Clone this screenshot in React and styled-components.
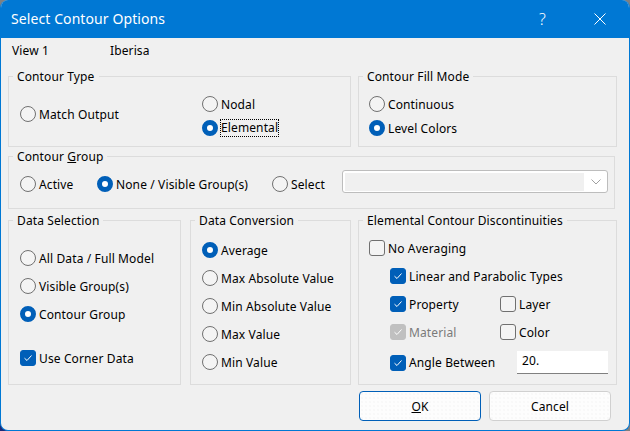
import styled, { createGlobalStyle } from 'styled-components'

const GlobalStyle = createGlobalStyle`
	html, body {
		margin: 0;
		padding: 0;
		height: 100%;
		background: linear-gradient(45deg, #1c2a78 12px, #808080 12px);
	}
	body {
		font-family: 'Noto Sans', 'Open Sans', sans-serif;
		font-size: 12px;
		letter-spacing: 0.12px;
		color: #000;
	}
`

const Window = styled.div`
	width: 630px;
	height: 431px;
	box-sizing: border-box;
	border: 1px solid #0078d4;
	border-top: none;
	border-radius: 8px;
	background: #f0f0f0;
	overflow: hidden;
	display: flex;
	flex-direction: column;
`

const TitleBar = styled.div`
	height: 38px;
	flex: none;
	background: #0078d4;
	color: #fff;
	display: flex;
	align-items: center;
	padding: 0 1px 0 10px;
`

const Title = styled.div`
	flex: 1;
	font-size: 14px;
	letter-spacing: 0.09px;
	margin-top: -2px;
`

const TitleButton = styled.div`
	width: 57px;
	height: 38px;
	display: flex;
	align-items: center;
	justify-content: center;
	font-size: 16px;
	font-weight: 300;
`

const Content = styled.div`
	flex: 1;
	display: flex;
	flex-direction: column;
	padding: 3px 12px 0 7px;
`

const ViewRow = styled.div`
	display: flex;
	height: 18px;
	align-items: center;
	padding-left: 4px;
	margin-bottom: 9px;
`

const ViewName = styled.div`
	width: 98px;
`

const Row = styled.div`
	display: flex;
	gap: ${p => p.$gap || 7}px;
	margin-bottom: ${p => p.$mb || 0}px;
`

const Group = styled.fieldset`
	margin: 0 0 0 ${p => p.$ml || 0}px;
	min-width: 0;
	box-sizing: border-box;
	width: ${p => p.$w}px;
	height: ${p => p.$h}px;
	padding: 0;
	border: 1px solid #dcdcdc;
`

const Legend = styled.legend`
	margin-left: 4px;
	padding: 0 4px;
	line-height: 18px;
	height: 16px;
`

const TypeBody = styled.div`
	display: grid;
	grid-template-columns: 182px 1fr;
	align-items: center;
	padding: 12px 0 0 11px;
`

const MatchCell = styled.div`
	margin-bottom: 4px;
`

const Stack = styled.div`
	display: flex;
	flex-direction: column;
	gap: ${p => p.$gap || 8}px;
	padding: ${p => p.$pad || '0'};
`

const Inline = styled.div`
	display: flex;
	align-items: flex-start;
	padding: 6px 6px 0 11px;

	> label {
		margin-top: 6px;
	}
`

const Option = styled.label`
	display: flex;
	align-items: center;
	height: ${p => p.$h || 16}px;
	gap: 3px;
	width: ${p => (p.$w ? `${p.$w}px` : 'auto')};
	flex: none;
	color: ${p => (p.$disabled ? '#7a7a7a' : '#000')};
`

const FocusText = styled.span`
	outline: 1px dotted #000;
	outline-offset: 0;
	line-height: 16px;
`

const RadioMark = styled.span`
	box-sizing: border-box;
	width: 16px;
	height: 16px;
	flex: none;
	border-radius: 50%;
	border: ${p => (p.$on ? '5px solid #005fb8' : '1px solid #707070')};
	background: ${p => (p.$on ? '#fff' : '#f4f4f4')};
`

const CheckMark = styled.span`
	box-sizing: border-box;
	width: 16px;
	height: 16px;
	flex: none;
	border-radius: 3px;
	display: flex;
	align-items: center;
	justify-content: center;
	border: 1px solid ${p => (p.$on ? (p.$disabled ? '#c0c0c0' : '#005fb8') : '#707070')};
	background: ${p => (p.$on ? (p.$disabled ? '#c0c0c0' : '#005fb8') : '#f4f4f4')};
`

const Radio = ({ on, focus, children, ...rest }) => (
	<Option {...rest}>
		<RadioMark $on={on} />
		{focus ? <FocusText>{children}</FocusText> : <span>{children}</span>}
	</Option>
)

const Check = ({ on, disabled, children, ...rest }) => (
	<Option $disabled={disabled} {...rest}>
		<CheckMark $on={on} $disabled={disabled}>
			{on && (
				<svg width='10' height='10' viewBox='0 0 10 10' fill='none' stroke='#fff' strokeWidth='1'>
					<path d='M1.5 5.2 L4 7.5 L8.5 2.5' />
				</svg>
			)}
		</CheckMark>
		<span>{children}</span>
	</Option>
)

const Combo = styled.div`
	flex: 1;
	height: 23px;
	box-sizing: border-box;
	border: 1px solid #bdbdbd;
	border-radius: 3px;
	background: #fff;
	display: flex;
	align-items: center;
	padding: 2px 0 2px 2px;
`

const ComboField = styled.div`
	width: 239px;
	height: 18px;
	background: #f0f0f0;
`

const ComboArrow = styled.div`
	flex: 1;
	display: flex;
	justify-content: center;
`

const CheckRows = styled.div`
	display: flex;
	flex-direction: column;
	gap: 12px;
	padding: 12px 0 0 10px;
`

const CheckRow = styled.div`
	display: flex;
	align-items: center;
	padding-left: ${p => p.$indent || 0}px;
	margin-top: ${p => p.$mt || 0}px;
`

const AngleInput = styled.div`
	width: 91px;
	height: 23px;
	box-sizing: border-box;
	background: #fff;
	border-bottom: 1px solid #808080;
	padding-left: 5px;
	line-height: 20px;
`

const Footer = styled.div`
	display: flex;
	justify-content: flex-end;
	gap: 8px;
	padding: 6px 6px 0 0;
`

const Button = styled.div`
	width: 122px;
	height: 30px;
	box-sizing: border-box;
	border-radius: 4px;
	background-color: #fdfdfd;
	background-image: radial-gradient(circle, #f2f2f2 0.6px, transparent 0.8px);
	background-size: 4px 4px;
	border: 1px solid ${p => (p.$primary ? '#005fb8' : '#d0d0d0')};
	display: flex;
	align-items: center;
	justify-content: center;
`

export default function App() {
	return (
		<>
			<GlobalStyle />
			<Window>
				<TitleBar>
					<Title>Select Contour Options</Title>
					<TitleButton>?</TitleButton>
					<TitleButton>
						<svg width='12' height='12' viewBox='0 0 12 12' stroke='#fff' strokeWidth='1'>
							<path d='M0.5 0.5 L11.5 11.5 M11.5 0.5 L0.5 11.5' />
						</svg>
					</TitleButton>
				</TitleBar>
				<Content>
					<ViewRow>
						<ViewName>View 1</ViewName>
						<div>Iberisa</div>
					</ViewRow>
					<Row $mb={1}>
						<Group $w={343} $h={79}>
							<Legend>Contour Type</Legend>
							<TypeBody>
								<MatchCell>
									<Radio>Match Output</Radio>
								</MatchCell>
								<Stack>
									<Radio>Nodal</Radio>
									<Radio on focus>Elemental</Radio>
								</Stack>
							</TypeBody>
						</Group>
						<Group $w={259} $h={79}>
							<Legend>Contour Fill Mode</Legend>
							<Stack $pad='12px 0 0 10px'>
								<Radio>Continuous</Radio>
								<Radio on>Level Colors</Radio>
							</Stack>
						</Group>
					</Row>
					<Row $mb={3}>
						<Group $w={607} $h={61}>
							<Legend>Contour <u>G</u>roup</Legend>
							<Inline>
								<Radio $w={77}>Active</Radio>
								<Radio on $w={175}>None / Visible Group(s)</Radio>
								<Radio $w={70}>Select</Radio>
								<Combo>
									<ComboField />
									<ComboArrow>
										<svg width='10' height='6' viewBox='0 0 10 6' fill='none' stroke='#a0a0a0'>
											<path d='M0.5 0.5 L5 5 L9.5 0.5' />
										</svg>
									</ComboArrow>
								</Combo>
							</Inline>
						</Group>
					</Row>
					<Row>
						<Group $w={173} $h={173}>
							<Legend>Data Selection</Legend>
							<Stack $gap={12} $pad='22px 0 0 11px'>
								<Radio>All Data / Full Model</Radio>
								<Radio>Visible Group(s)</Radio>
								<Radio on>Contour Group</Radio>
								<Check on $h={48}>Use Corner Data</Check>
							</Stack>
						</Group>
						<Group $w={161} $h={173} $ml={2}>
							<Legend>Data Conversion</Legend>
							<Stack $gap={12} $pad='14px 0 0 11px'>
								<Radio on>Average</Radio>
								<Radio>Max Absolute Value</Radio>
								<Radio>Min Absolute Value</Radio>
								<Radio>Max Value</Radio>
								<Radio>Min Value</Radio>
							</Stack>
						</Group>
						<Group $w={259} $h={173}>
							<Legend>Elemental Contour Discontinuities</Legend>
							<CheckRows>
								<Check>No Averaging</Check>
								<CheckRow $indent={21}><Check on>Linear and Parabolic Types</Check></CheckRow>
								<CheckRow $indent={21}>
									<Check on $w={110}>Property</Check>
									<Check>Layer</Check>
								</CheckRow>
								<CheckRow $indent={21}>
									<Check on disabled $w={110}>Material</Check>
									<Check>Color</Check>
								</CheckRow>
								<CheckRow $indent={21} $mt={-1}>
									<Check on $w={127}>Angle Between</Check>
									<AngleInput>20.</AngleInput>
								</CheckRow>
							</CheckRows>
						</Group>
					</Row>
					<Footer>
						<Button $primary><span><u>O</u>K</span></Button>
						<Button>Cancel</Button>
					</Footer>
				</Content>
			</Window>
		</>
	)
}
